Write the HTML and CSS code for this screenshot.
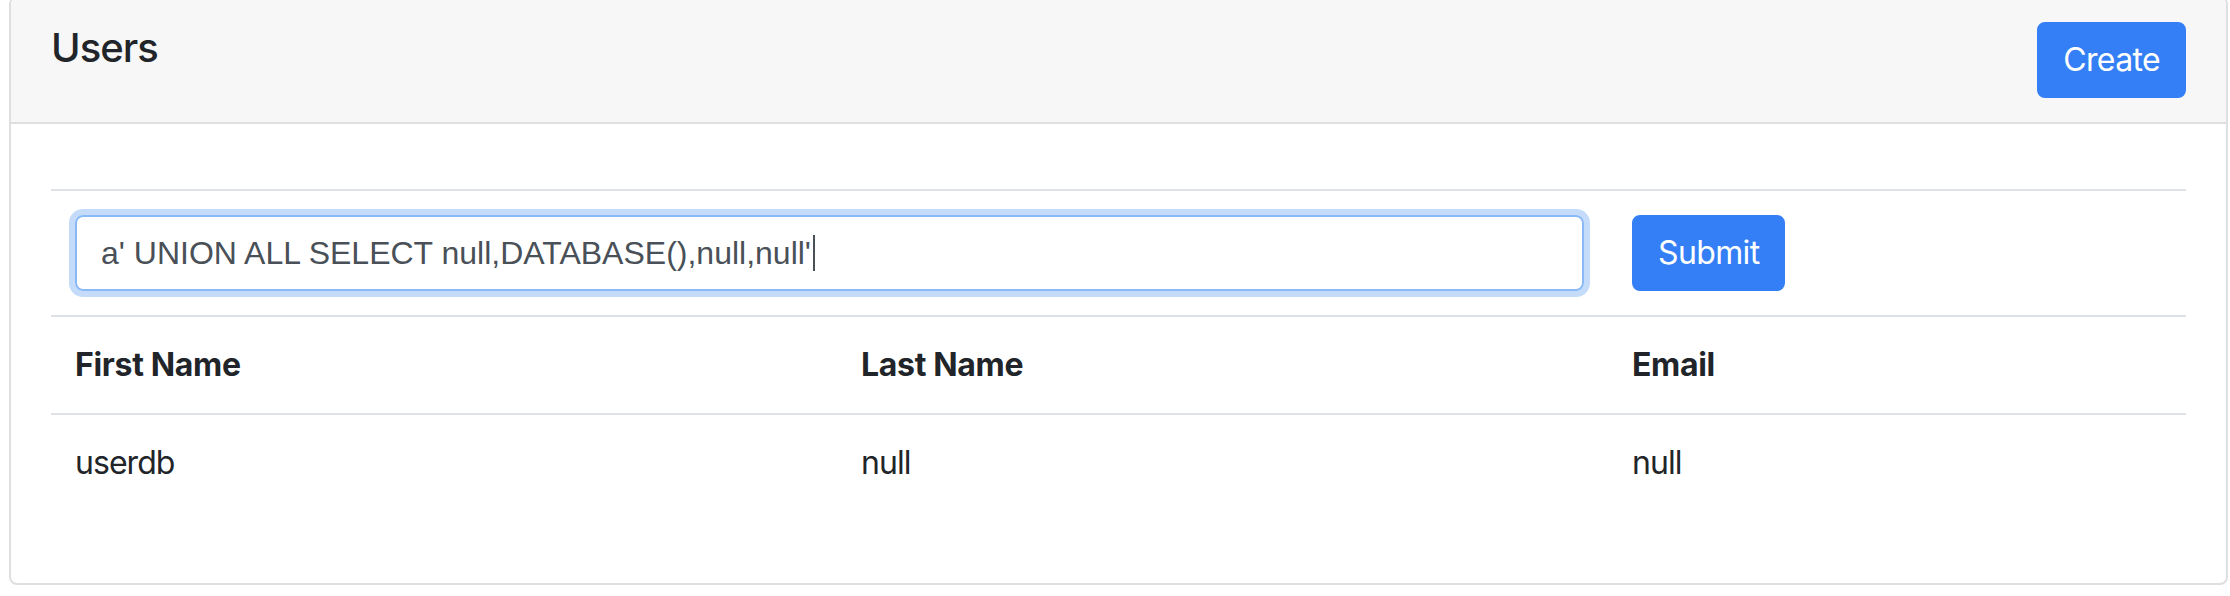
FILE: index.html
```html
<!DOCTYPE html>
<html lang="en">
<head>
<meta charset="utf-8">
<title>Users</title>
<link rel="stylesheet" href="styles.css">
</head>
<body>
<div class="card">
  <div class="card-header">
    <h5 class="card-title">Users</h5>
    <button class="btn">Create</button>
  </div>
  <div class="card-body">
    <div class="table">
      <div class="cell cell-input">
        <div class="input"><span class="input-text">a' UNION ALL SELECT null,DATABASE(),null,null'</span><span class="caret"></span></div>
      </div>
      <div class="cell"><button class="btn">Submit</button></div>
      <div class="cell th">First Name</div>
      <div class="cell th">Last Name</div>
      <div class="cell th">Email</div>
      <div class="cell">userdb</div>
      <div class="cell">null</div>
      <div class="cell">null</div>
    </div>
  </div>
</div>
</body>
</html>
```
FILE: styles.css
```css
* { box-sizing: border-box; }
html, body { margin: 0; padding: 0; background: #ffffff; }
body {
  font-family: Inter, "Liberation Sans", sans-serif;
  color: #212529;
  font-size: 32px;
  line-height: 48px;
  letter-spacing: -0.03em;
}
.card {
  margin: -4px 0 0 9px;
  width: 2219px;
  border: 2px solid #dfdfdf;
  border-radius: 8px;
  background: #fff;
}
.card-header {
  background: #f7f7f7;
  border-bottom: 2px solid #dfdfdf;
  padding: 24px 40px;
  display: flex;
  justify-content: space-between;
  align-items: flex-start;
  border-radius: 6px 6px 0 0;
}
.card-title {
  margin: 2px 0 0 0;
  font-size: 40px;
  line-height: 48px;
  font-weight: 500;
  color: #212529;
}
.btn {
  font-family: inherit;
  font-size: 32px;
  line-height: 48px;
  letter-spacing: -0.02em;
  color: #fff;
  background: #347ff6;
  border: 2px solid #347ff6;
  border-radius: 8px;
  padding: 12px 24px;
  height: 76px;
  margin: 0;
}
.card-body {
  padding: 40px;
}
.table {
  margin: 25px 0 32px 0;
  display: grid;
  grid-template-columns: 786px 771px 1fr;
}
.cell {
  border-top: 2px solid #dee2e6;
  padding: 24px;
}
.cell-input { grid-column: span 2; }
.th { font-weight: 700; letter-spacing: -0.01em; }
.input {
  height: 76px;
  border: 2px solid #8ab9f8;
  border-radius: 8px;
  box-shadow: 0 0 0 6px #c4dcfa;
  padding: 12px 24px;
  font-family: "Liberation Sans", Arial, sans-serif;
  font-size: 32px;
  line-height: 48px;
  letter-spacing: 0;
  color: #495057;
  display: flex;
  align-items: center;
  white-space: nowrap;
}
.caret {
  display: inline-block;
  width: 2px;
  height: 36px;
  background: #495057;
  margin-left: 2px;
}
```
